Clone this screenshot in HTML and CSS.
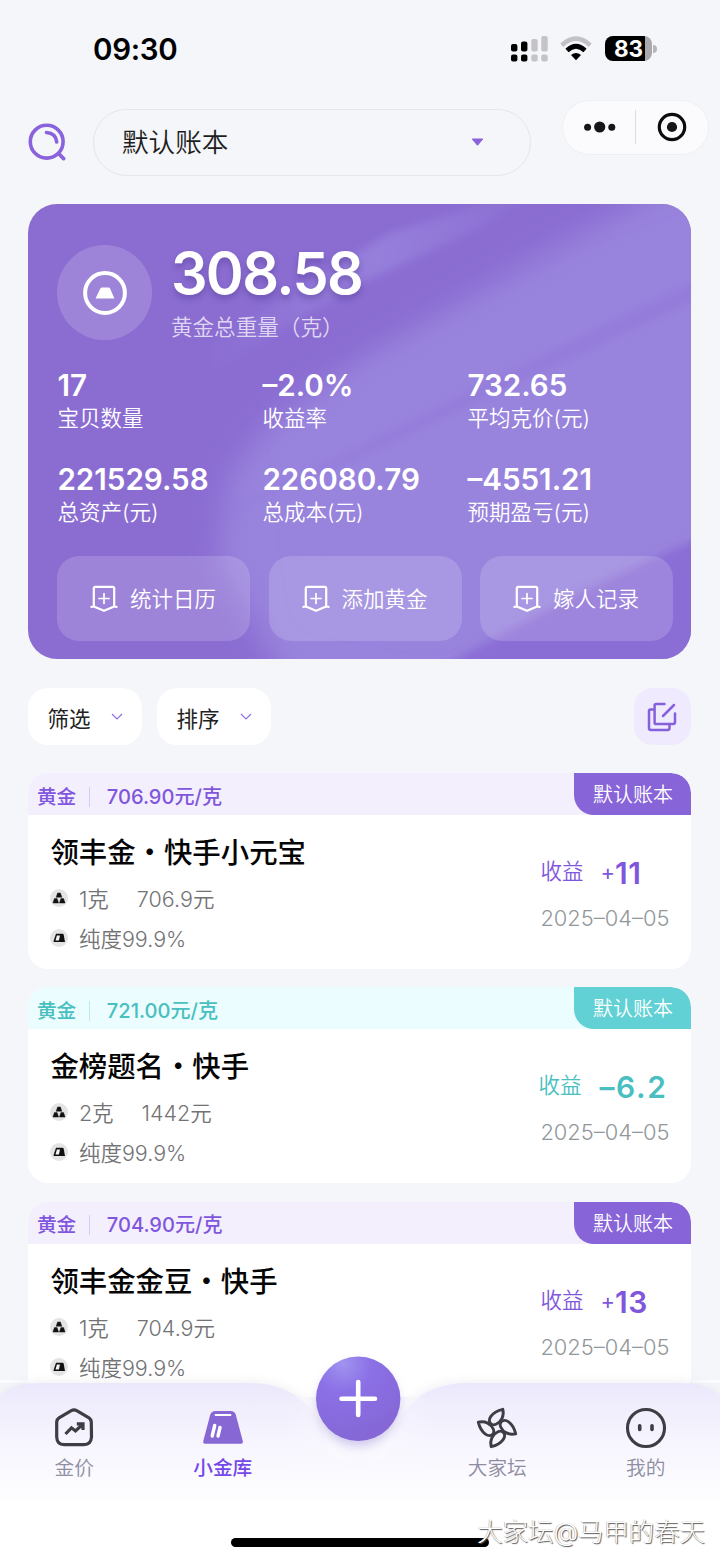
FILE: index.html
```html
<!DOCTYPE html>
<html lang="zh-CN">
<head>
<meta charset="utf-8">
<title>小金库</title>
<link rel="stylesheet" href="styles.css">
</head>
<body>
<svg class="defs" width="0" height="0">
  <defs>
    <symbol id="badge" viewBox="0 0 28 28"><path d="M3.8 21.5V3.4Q3.8 1.9 5.3 1.9H22.7Q24.2 1.9 24.2 3.4V21.5M1.4 21.8L3.8 21.5L14 25.8L24.2 21.5L26.6 21.8" fill="none" stroke="currentColor" stroke-width="2.2" stroke-linecap="round" stroke-linejoin="round"/><path d="M14 8.5V18.5M9 13.5H19" stroke="currentColor" stroke-width="1.7" stroke-linecap="round"/></symbol>
    <symbol id="bars" viewBox="0 0 18 18"><circle cx="9" cy="9" r="9" fill="#e4e4e4"/><path d="M7.6 3.9H10.4L11.9 8.3H6.1ZM4.4 9.5H7.1L8.6 14.1H2.9ZM10.9 9.5H13.6L15.1 14.1H9.4Z" fill="#111" stroke="#111" stroke-width=".4" stroke-linejoin="round"/></symbol>
    <symbol id="ingot" viewBox="0 0 18 18"><circle cx="9" cy="9" r="9" fill="#e4e4e4"/><path d="M6 4.8H12.6Q13.4 4.8 13.7 5.8L15 13H4Q3.3 13 3.6 12Z" fill="#111"/><path d="M6.9 6.6H10L8.9 11.4H5.5Z" fill="#f3f3f3"/></symbol>
    <symbol id="chev" viewBox="0 0 12 8"><path d="M1 1L6 6L11 1" fill="none" stroke="#8f6be0" stroke-width="1.1"/></symbol>
  </defs>
</svg>
<div class="screen">
  <div class="status">
    <span class="clock">09:30</span>
    <div class="status-icons">
      <svg width="37" height="26" viewBox="0 0 37 26"><g fill="#000"><rect x="0" y="8" width="6.4" height="7.5" rx="2"/><rect x="10" y="5.5" width="6.4" height="10" rx="2"/><rect x="0" y="18.5" width="6.4" height="7" rx="2"/><rect x="10" y="18.5" width="6.4" height="7" rx="2"/></g><g fill="#c3c3c8"><rect x="20.3" y="3" width="6.4" height="12.5" rx="2"/><rect x="30.3" y="0" width="6.4" height="15.5" rx="2"/><rect x="20.3" y="18.5" width="6.4" height="7" rx="2"/><rect x="30.3" y="18.5" width="6.4" height="7" rx="2"/></g></svg>
      <svg class="wifi" width="32" height="26" viewBox="0 0 32 26"><path d="M1.8 9.2Q16 -3.8 30.2 9.2" fill="none" stroke="#c1c1c6" stroke-width="4.6"/><path d="M7 14.5Q16 6 25 14.5" fill="none" stroke="#000" stroke-width="4.6"/><path d="M11 19Q16 14.8 21 19L16 24.3Z" fill="#000"/></svg>
      <div class="battery"><span>83</span></div><i class="nub"></i>
    </div>
  </div>
  <div class="topbar">
    <svg class="search" width="40" height="40" viewBox="0 0 40 40" fill="none" stroke="#8a63dc" stroke-linecap="round"><circle cx="18.7" cy="18.7" r="16.4" stroke-width="3.6"/><path d="M18.5 9.5Q28 10.3 28.7 19" stroke-width="3.6"/><path d="M31.5 31.5L35.6 35.6" stroke-width="3.8"/></svg>
    <div class="select"><span>默认账本</span><svg width="13" height="9" viewBox="0 0 13 9"><path d="M1.2 1H11.8L6.5 7.3Z" fill="#8a63dc" stroke="#8a63dc" stroke-linejoin="round"/></svg></div>
    <div class="capsule">
      <svg width="32" height="12" viewBox="0 0 32 12" fill="#15151a"><circle cx="3.6" cy="6.2" r="3.5"/><circle cx="15.7" cy="6" r="5.6"/><circle cx="27.8" cy="6.2" r="3.5"/></svg>
      <i></i>
      <svg width="30" height="30" viewBox="0 0 30 30"><circle cx="15" cy="15" r="12.7" fill="none" stroke="#0c0c10" stroke-width="3.2"/><circle cx="15" cy="15" r="5.1" fill="#15151a"/></svg>
    </div>
  </div>

  <section class="vault">
    <svg class="sheen" width="663" height="455" viewBox="0 0 663 455">
      <defs><filter id="soft" x="-20%" y="-20%" width="140%" height="140%"><feGaussianBlur stdDeviation="14"/></filter><filter id="fine" x="-20%" y="-20%" width="140%" height="140%"><feGaussianBlur stdDeviation="4"/></filter>
      <linearGradient id="ray" x1="0" x2="1"><stop offset="0" stop-color="#9883dd" stop-opacity="0"/><stop offset=".5" stop-color="#9883dd"/><stop offset="1" stop-color="#9883dd" stop-opacity="0"/></linearGradient></defs>
      <path d="M700 -60L610 0L520 48L330 158L245 215L200 275L190 355L270 500H400L720 340V-60Z" fill="#9883dd" filter="url(#soft)"/>
      <path d="M720 20L520 90L350 165L270 240L290 400L400 420L720 330Z" fill="#9883dd" filter="url(#soft)"/>
      <path d="M180 140L360 30L520 -20L450 25L320 85L180 170Z" fill="url(#ray)" opacity=".85" filter="url(#fine)"/>
      <path d="M680 72L500 160L340 240L180 317L345 246L505 170L680 90Z" fill="#8b6fd5" opacity=".36" filter="url(#fine)"/>
      <path d="M680 330L560 385L400 470H680Z" fill="#8b6dd6" filter="url(#fine)"/>
    </svg>
    <div class="total">
      <div class="disc"><svg width="46" height="46" viewBox="0 0 46 46"><circle cx="23" cy="23" r="19.9" fill="none" stroke="#fff" stroke-width="4"/><path d="M20 17.6H26.4Q27.6 17.6 28.2 18.8L32.4 28.6H13.6L18.2 18.8Q18.8 17.6 20 17.6Z" fill="#fff"/></svg></div>
      <div class="total-text"><strong>308.58</strong><span>黄金总重量（克）</span></div>
    </div>
    <div class="stats">
      <div><b>17</b><span>宝贝数量</span></div>
      <div><b>–2.0%</b><span>收益率</span></div>
      <div><b>732.65</b><span>平均克价(元)</span></div>
      <div><b>221529.58</b><span>总资产(元)</span></div>
      <div><b>226080.79</b><span>总成本(元)</span></div>
      <div><b>–4551.21</b><span>预期盈亏(元)</span></div>
    </div>
    <div class="actions">
      <div><svg width="28" height="28"><use href="#badge"/></svg>统计日历</div>
      <div><svg width="28" height="28"><use href="#badge"/></svg>添加黄金</div>
      <div><svg width="28" height="28"><use href="#badge"/></svg>嫁人记录</div>
    </div>
  </section>

  <div class="tools">
    <div class="pill">筛选<svg width="12" height="8"><use href="#chev"/></svg></div>
    <div class="pill">排序<svg width="12" height="8"><use href="#chev"/></svg></div>
    <div class="edit"><svg width="30" height="30" viewBox="0 0 30 30" fill="none" stroke="#8660dc" stroke-width="2.5" stroke-linecap="round" stroke-linejoin="round"><path d="M17.5 2H9.2Q7.6 2 7.6 3.6V20.4Q7.6 22 9.2 22H26Q28 22 28 20V11.5"/><path d="M7 7.6H3.6Q2 7.6 2 9.2V26Q2 28 4 28H20.5Q22.5 28 22.5 26V22.5"/><path d="M16 14L27 3"/></svg></div>
  </div>

  <div class="list">
    <article class="item">
      <header><span class="kind">黄金</span><i></i><span class="price">706.90元/克</span><em>默认账本</em></header>
      <div class="body">
        <div class="info"><h2>领丰金・快手小元宝</h2>
          <p><svg width="18" height="18"><use href="#bars"/></svg><span class="weight">1克</span><span>706.9元</span></p>
          <p><svg width="18" height="18"><use href="#ingot"/></svg><span>纯度99.9%</span></p></div>
        <div class="gain"><div><span>收益</span><small>+</small><b>11</b></div><time>2025–04–05</time></div>
      </div>
    </article>
    <article class="item teal">
      <header><span class="kind">黄金</span><i></i><span class="price">721.00元/克</span><em>默认账本</em></header>
      <div class="body">
        <div class="info"><h2>金榜题名・快手</h2>
          <p><svg width="18" height="18"><use href="#bars"/></svg><span class="weight">2克</span><span>1442元</span></p>
          <p><svg width="18" height="18"><use href="#ingot"/></svg><span>纯度99.9%</span></p></div>
        <div class="gain"><div><span>收益</span><b>–6.2</b></div><time>2025–04–05</time></div>
      </div>
    </article>
    <article class="item">
      <header><span class="kind">黄金</span><i></i><span class="price">704.90元/克</span><em>默认账本</em></header>
      <div class="body">
        <div class="info"><h2>领丰金金豆・快手</h2>
          <p><svg width="18" height="18"><use href="#bars"/></svg><span class="weight">1克</span><span>704.9元</span></p>
          <p><svg width="18" height="18"><use href="#ingot"/></svg><span>纯度99.9%</span></p></div>
        <div class="gain"><div><span>收益</span><small>+</small><b>13</b></div><time>2025–04–05</time></div>
      </div>
    </article>
  </div>

  <nav class="tabbar">
    <svg class="tab-bg" width="720" height="220" viewBox="0 0 720 220">
      <defs>
        <linearGradient id="hump" gradientUnits="userSpaceOnUse" x1="0" y1="43" x2="0" y2="165"><stop offset="0" stop-color="#ece8fc"/><stop offset=".45" stop-color="#f6f4fe"/><stop offset="1" stop-color="#fff"/></linearGradient>
        <linearGradient id="base" gradientUnits="userSpaceOnUse" x1="0" y1="57" x2="0" y2="130"><stop offset="0" stop-color="#f5f6f9"/><stop offset="1" stop-color="#fcfcff"/></linearGradient>
        <linearGradient id="edge" x1="0" x2="1"><stop offset="0" stop-color="#f9f8fe" stop-opacity="0"/><stop offset=".5" stop-color="#f9f8fe" stop-opacity=".9"/><stop offset="1" stop-color="#f9f8fe" stop-opacity="0"/></linearGradient>
        <radialGradient id="orb" cx=".32" cy=".08" r=".9"><stop offset="0" stop-color="#a093ef"/><stop offset=".38" stop-color="#8b70e6"/><stop offset="1" stop-color="#8567d6"/></radialGradient>
        <filter id="shade" x="-30%" y="-30%" width="160%" height="160%"><feGaussianBlur stdDeviation="6"/></filter>
      </defs>
      <path d="M0 41.5H28M692 41.5H720" stroke="#fff" stroke-width="2"/>
      <path d="M0 57Q14 43 38 43H250C290 43 315 65 322 90L330 110H388L395 90C402 65 425 43 465 43H682Q706 43 720 57V120H0Z" fill="#5a5a80" opacity=".1" filter="url(#shade)"/>
      <path d="M290 57H430V160H290Z" fill="url(#base)"/>
      <path d="M0 56Q14 43 38 43H250C290 43 316 66 325 96Q329 118 336 120H381Q390 117 393 96C401 66 427 43 467 43H682Q706 43 720 56V220H0Z" fill="url(#hump)"/>
      <path d="M285 57H430V130H285Z" fill="url(#edge)"/>
      <circle cx="358" cy="65" r="40" fill="#6d55c5" opacity=".35" filter="url(#shade)"/>
      <circle cx="358.2" cy="58.8" r="42.2" fill="url(#orb)"/>
      <path d="M358.2 42V75M341.5 58.7H375" stroke="#fff" stroke-width="4.6" stroke-linecap="round"/>
    </svg>
    <div class="tabs">
      <div><svg width="42" height="42" viewBox="0 0 42 42" fill="none" stroke="#3c3e43" stroke-width="3.2" stroke-linejoin="round" stroke-linecap="round"><path d="M18.3 3.7Q21 2 23.7 3.7L36 10.8Q38 12 38.3 15L38.5 30Q38 37.5 31 37.7H11Q4 37.5 3.7 30V15Q4 12 6 10.8Z"/><path d="M12.5 27L18.5 20.8L22.5 24L30 17M23.8 16.8H30V23" stroke-width="3.2" stroke-linecap="butt" stroke-linejoin="miter"/></svg>金价</div>
      <div class="on"><svg width="42" height="42" viewBox="0 0 42 42"><path d="M13.5 4H28.5Q32.7 4 33.7 7.5L40.8 34Q41.2 36.7 39 36.7H3Q.8 36.7 1.3 34L8.3 7.5Q9.5 4 13.5 4Z" fill="#8667d4"/><path d="M13.5 8H28.5" stroke="#fff" stroke-width="1.8" stroke-linecap="round"/><path d="M12.7 18.5L10.2 29M18 20.5L16 29" stroke="#fff" stroke-width="3.4" stroke-linecap="round"/></svg>小金库</div>
      <div></div>
      <div><svg width="42" height="42" viewBox="0 0 42 42" fill="none" stroke="#3c3e43" stroke-width="2.9" stroke-linejoin="round"><path d="M15.5 17.3C10 13.5 15.5 5 26.8 2.3C28.5 9.5 25 15 20 17.3Q17.5 18.4 15.5 17.3Z"/><path d="M15.5 17.3C10 13.5 15.5 5 26.8 2.3C28.5 9.5 25 15 20 17.3Q17.5 18.4 15.5 17.3Z" transform="rotate(90 21 21)"/><path d="M15.5 17.3C10 13.5 15.5 5 26.8 2.3C28.5 9.5 25 15 20 17.3Q17.5 18.4 15.5 17.3Z" transform="rotate(180 21 21)"/><path d="M15.5 17.3C10 13.5 15.5 5 26.8 2.3C28.5 9.5 25 15 20 17.3Q17.5 18.4 15.5 17.3Z" transform="rotate(270 21 21)"/></svg>大家坛</div>
      <div><svg width="42" height="42" viewBox="0 0 42 42"><circle cx="21" cy="21" r="18.5" fill="none" stroke="#3c3e43" stroke-width="3.1"/><path d="M14.7 18.8V22.5M27 18.8V22.5" stroke="#3c3e43" stroke-width="3.6" stroke-linecap="round"/></svg>我的</div>
    </div>
    <div class="home"></div>
    <div class="mark">大家坛@马甲的春天</div>
  </nav>
</div>
</body>
</html>
```
FILE: styles.css
```css
* { box-sizing: border-box; }
body { margin: 0; background: #f4f5fa; font-family: Inter, "Noto Sans CJK SC", sans-serif; }
svg { display: block; flex: none; }
.defs { position: absolute; }
b, strong, h2 { font-weight: 600; }
.screen { position: relative; width: 720px; height: 1560px; overflow: hidden; background: #f4f6fa; }

.status { display: flex; justify-content: space-between; height: 101px; padding: 34px 63px 0 93px; }
.clock { font-size: 29.5px; line-height: 31px; font-weight: 600; letter-spacing: -.3px; }
.status-icons { display: flex; padding-top: 2px; }
.wifi { margin-left: 12px; }
.battery { width: 47px; height: 25px; margin-left: 13px; border-radius: 8px; background: linear-gradient(90deg, #000 0 40px, #a9a9ad 40px); color: #fff; font-size: 22.5px; line-height: 25px; font-weight: 700; text-align: center; }
.nub { width: 4px; height: 8px; margin: 9px 0 0 1px; border-radius: 0 4px 4px 0; background: #b5b5ba; }

.topbar { display: flex; height: 103px; padding: 0 12px 0 28px; }
.search { margin-top: 22px; }
.select { display: flex; align-items: center; justify-content: space-between; width: 438px; height: 67px; margin: 8px 0 0 25px; padding: 0 46px 1px 28px; border: 1.5px solid #e5e6ec; border-radius: 34px; color: #1d1d20; font-size: 26.6px; line-height: 40px; font-weight: 350; }
.capsule { display: flex; align-items: center; width: 145px; height: 53px; margin-left: auto; padding: 0 0 2px 21px; border-radius: 27px; background: #fbfbfd; box-shadow: 0 0 0 1px #f0f0f4; }
.capsule i { width: 1px; height: 34px; margin: 0 21px 0 19px; background: #dddde2; }

.vault { position: relative; width: 663px; height: 455px; margin-left: 28.4px; padding: 41px 0 0 29px; border-radius: 29px; overflow: hidden; background: #8b6dd2; color: #fff; }
.sheen { position: absolute; left: 0; top: 0; }
.total, .stats, .actions { position: relative; }
.total { display: flex; height: 95px; }
.disc { display: grid; place-items: center; width: 95px; height: 95px; border-radius: 50%; background: rgba(255,255,255,.16); }
.total-text { display: flex; flex-direction: column; margin-left: 18.5px; }
.total-text strong { height: 56px; font-size: 57.5px; line-height: 56px; letter-spacing: -1.6px; text-shadow: 0 4px 6px rgba(60,40,120,.35); }
.total-text span { margin-top: 10px; color: rgba(255,255,255,.74); font-size: 21.6px; line-height: 30px; font-weight: 350; font-family: "Noto Sans CJK SC", sans-serif; }
.stats { display: grid; grid-template-columns: 205px 205px 205px; grid-auto-rows: 94px; margin-top: 28px; }
.stats div { display: flex; flex-direction: column; white-space: nowrap; }
.stats b { font-size: 29.6px; line-height: 34px; }
.stats span { font-size: 21.5px; line-height: 32px; font-weight: 350; }
.actions { display: flex; gap: 18.5px; }
.actions div { display: flex; align-items: center; gap: 11.5px; width: 193px; height: 85px; padding-left: 33px; border-radius: 22px; background: rgba(255,255,255,.16); font-size: 21.5px; line-height: 30px; font-weight: 350; }

.tools { display: flex; gap: 15px; height: 57px; margin: 29px 28.6px 0 28.4px; }
.pill { display: flex; align-items: center; gap: 22px; width: 114px; padding: 4px 0 0 19px; border-radius: 20px; background: #fff; color: #222; font-size: 21.5px; line-height: 30px; }
.pill svg { margin: -4px 0 0 -1.5px; }
.edit { display: grid; place-items: center; width: 57px; margin-left: auto; padding-right: 1px; border-radius: 19px; background: #efeafd; }

.list { display: flex; flex-direction: column; gap: 18.4px; margin: 28px 28.6px 0 28.4px; }
.item { height: 196px; border-radius: 20px; overflow: hidden; background: #fff; --main: #8057dc; --tag: #8764d8; --tint: #f4effd; --rule: #d9c9f3; width: 663px; flex: none; }
.teal { --main: #49bfc1; --tag: #62d1d5; --tint: #ebfdfe; --rule: #bfe9ea; }
.item header { display: flex; align-items: center; height: 42px; padding: 5px 0 0 8.5px; background: var(--tint); color: var(--main); font-size: 19.7px; line-height: 42px; font-weight: 450; }
.item header i { width: 1.5px; height: 20px; margin: 0 16.5px 0 12.5px; background: var(--rule); }
.price { font-size: 20.1px; }
.item em { width: 117px; height: 42px; margin: -5px 0 0 auto; padding-top: 1px; border-radius: 0 20px 0 20px; background: var(--tag); color: #fff; text-align: center; font-style: normal; font-weight: 350; font-size: 20px; }
.body { display: flex; justify-content: space-between; padding: 18px 0 0 22px; }
.info h2 { margin: 0; color: #050505; font-size: 28.4px; line-height: 40px; font-weight: 500; }
.info p { display: flex; align-items: center; height: 40px; margin: 0; color: #737376; font-size: 21.5px; line-height: 40px; font-weight: 350; }
.info h2 + p { margin-top: 6px; }
.info p svg { margin: -2px 10.5px 0 0; }
.weight { margin-right: 28px; }
.gain { width: 151px; padding-top: 20px; white-space: nowrap; }
.gain div { display: flex; height: 36px; color: var(--main); line-height: 40px; }
.gain div span { margin: -2px 17px 0 0; font-size: 21.5px; font-weight: 350; }
.gain small { font-size: 22px; line-height: 38px; }
.gain b { font-size: 30px; letter-spacing: .5px; }
.gain time { display: block; margin-top: 9px; color: #92979a; font-size: 21.9px; line-height: 40px; font-weight: 330; }
.teal .gain div { margin-left: -2px; }
.teal .gain b { margin-left: 1px; letter-spacing: 1.7px; }

.tabbar { position: absolute; left: 0; bottom: 0; width: 720px; height: 220px; }
.tab-bg { position: absolute; left: 0; top: 0; }
.tabs { position: relative; display: grid; grid-template-columns: 148.5px 148.5px 1fr 148.5px 148.5px; padding-top: 67px; }
.tabs div { display: flex; flex-direction: column; align-items: center; gap: 4px; color: #8e8da2; font-size: 19.7px; line-height: 30px; font-weight: 350; }
.tabs .on { color: #7548e8; font-weight: 500; }
.home { position: absolute; left: 231px; top: 198px; width: 258px; height: 9px; border-radius: 5px; background: #000; }
.mark { position: absolute; right: 15px; top: 174px; color: #fff; font-size: 25.4px; line-height: 36px; font-weight: 300; text-shadow: 1px 1px 1px #555, -.5px 0 .5px #aaa; white-space: nowrap; }
```
